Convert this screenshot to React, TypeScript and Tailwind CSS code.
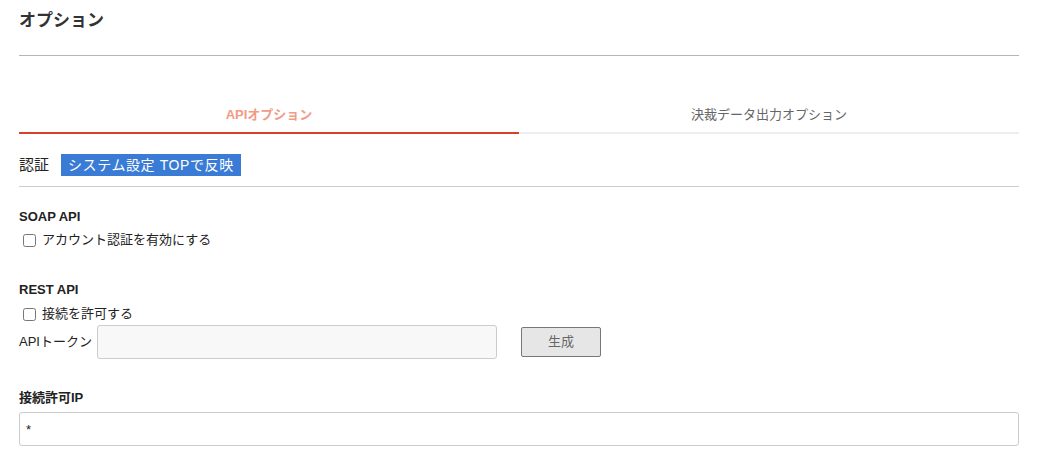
import React, { useState } from 'react';

const font = "font-['Liberation_Sans','Noto_Sans_CJK_JP',sans-serif]";

const App: React.FC = () => {
  const [tab, setTab] = useState<'api' | 'export'>('api');
  const [soapAuth, setSoapAuth] = useState(false);
  const [restAllow, setRestAllow] = useState(false);
  const [token, setToken] = useState('');
  const [allowIp, setAllowIp] = useState('*');

  return (
    <div className={`${font} min-h-[458px] bg-white px-[19px] pr-[21px] pt-[9px] text-[#333]`}>
      {/* Header */}
      <h1 className="pb-[22px] text-[17px] font-bold leading-[24px] text-[#333]">オプション</h1>
      <div className="h-px bg-[#b5b5b5]" />

      {/* Tabs */}
      <div className="mt-[38px] flex">
        <button
          onClick={() => setTab('api')}
          className={`flex h-[40px] flex-1 items-start justify-center border-b-2 pt-[12px] text-[13px] leading-[18px] ${
            tab === 'api' ? 'border-[#d9402b] font-bold text-[#f29a85]' : 'border-[#eeeeee] text-[#666]'
          }`}
        >
          APIオプション
        </button>
        <button
          onClick={() => setTab('export')}
          className={`flex h-[40px] flex-1 items-start justify-center border-b-2 pt-[12px] text-[13px] leading-[18px] ${
            tab === 'export' ? 'border-[#d9402b] font-bold text-[#f29a85]' : 'border-[#eeeeee] text-[#666]'
          }`}
        >
          決裁データ出力オプション
        </button>
      </div>

      {/* Section title */}
      <div className="mt-[20px] flex items-center gap-[12px] pb-[10px]">
        <span className="text-[15px] leading-[22px] text-[#222]">認証</span>
        <span className="bg-[#3a7bd5] px-[7px] text-[14px] leading-[22px] tracking-[0.6px] text-white">
          システム設定 TOPで反映
        </span>
      </div>
      <div className="h-px bg-[#cccccc]" />

      {/* SOAP API */}
      <div className="mt-[21px]">
        <h3 className="text-[13px] font-bold leading-[18px] text-[#222]">SOAP API</h3>
        <label className="mt-[5px] flex items-center gap-[6px] pl-[4px] text-[13px] leading-[18px] text-[#222]">
          <input
            type="checkbox"
            checked={soapAuth}
            onChange={(e) => setSoapAuth(e.target.checked)}
            className="m-0 h-[13px] w-[13px]"
          />
          アカウント認証を有効にする
        </label>
      </div>

      {/* REST API */}
      <div className="mt-[32px]">
        <h3 className="text-[13px] font-bold leading-[18px] text-[#222]">REST API</h3>
        <label className="mt-[6px] flex items-center gap-[6px] pl-[4px] text-[13px] leading-[18px] text-[#222]">
          <input
            type="checkbox"
            checked={restAllow}
            onChange={(e) => setRestAllow(e.target.checked)}
            className="m-0 h-[13px] w-[13px]"
          />
          接続を許可する
        </label>
        <div className="mt-[2px] flex items-center">
          <span className="w-[78px] text-[13px] leading-[18px] text-[#222]">APIトークン</span>
          <input
            type="text"
            value={token}
            onChange={(e) => setToken(e.target.value)}
            className="h-[34px] w-[400px] rounded-[3px] border border-[#cccccc] bg-[#f8f8f8] px-[6px] text-[13px] outline-none"
          />
          <button className="ml-[24px] h-[30px] w-[80px] rounded-[2px] border border-[#777] bg-[#e6e6e6] text-[13px] text-[#666]">
            生成
          </button>
        </div>
      </div>

      {/* 接続許可IP */}
      <div className="mt-[30px]">
        <h3 className="text-[13px] font-bold leading-[18px] text-[#222]">接続許可IP</h3>
        <input
          type="text"
          value={allowIp}
          onChange={(e) => setAllowIp(e.target.value)}
          className="mt-[5px] h-[34px] w-full rounded-[3px] border border-[#cccccc] bg-white px-[6px] text-[13px] text-[#222] outline-none"
        />
      </div>
    </div>
  );
};

export default App;
